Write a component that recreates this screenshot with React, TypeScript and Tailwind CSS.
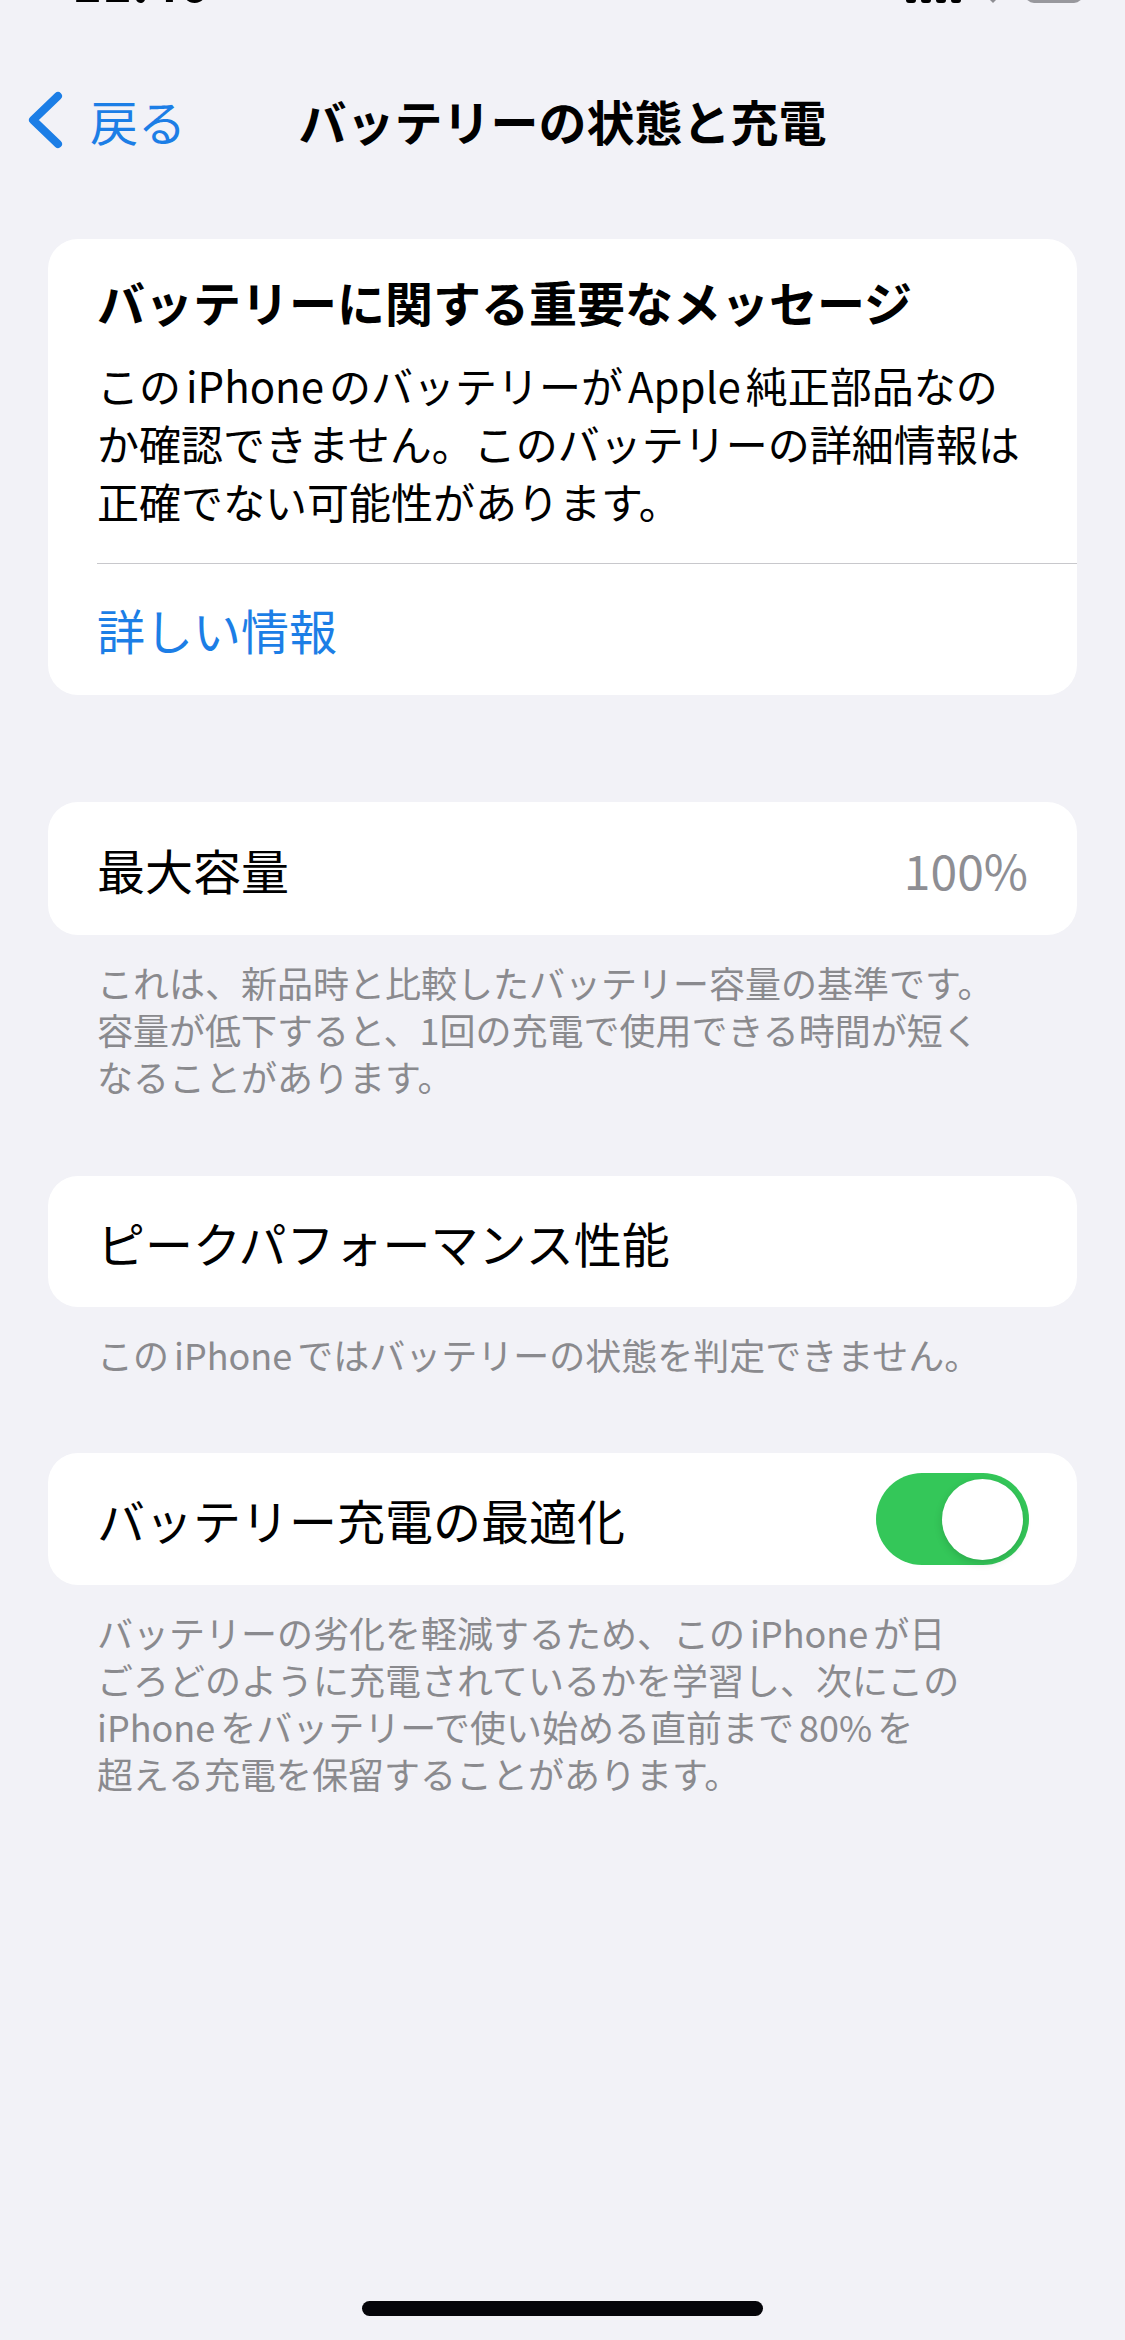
import React from "react";

const Latin = ({ children }: { children: React.ReactNode }) => (
  <span className="mx-[5px]">{children}</span>
);

function StatusBar() {
  // only the bottom few pixels of the status bar are visible in the shot
  return (
    <div className="h-[4px] overflow-hidden">
      <div className="-mt-[42px] flex h-[48px] items-end justify-between pl-[72px] pr-[42px]">
        <span className="text-[51px] font-bold leading-none text-black">11:46</span>
        <div className="mb-[3px] flex items-end gap-[14px]">
          <div className="flex items-end gap-[5px]">
            <div className="h-[14px] w-[10px] rounded-[3px] bg-black" />
            <div className="h-[20px] w-[10px] rounded-[3px] bg-black" />
            <div className="h-[26px] w-[10px] rounded-[3px] bg-black" />
            <div className="h-[32px] w-[10px] rounded-[3px] bg-black" />
          </div>
          <svg width="36" height="26" viewBox="0 0 36 26" className="text-[#8e8e93]">
            <path d="M18 26 L10 18 A11 11 0 0 1 26 18 Z" fill="currentColor" />
          </svg>
          <div className="h-[30px] w-[58px] rounded-[9px] bg-[#98989d]" />
        </div>
      </div>
    </div>
  );
}

function NavBar() {
  return (
    <div className="mt-[86px] grid h-[60px] grid-cols-[1fr_auto_1fr] items-center">
      <div className="flex items-center pl-[26px]">
        <svg width="38" height="58" viewBox="0 0 38 58" fill="none">
          <path
            d="M32 5 L7 29 L32 53"
            stroke="#1c7ee6"
            strokeWidth="8"
            strokeLinecap="round"
            strokeLinejoin="round"
          />
        </svg>
        <span className="ml-[26px] text-[48px] leading-[60px] text-[#1c7ee6]">戻る</span>
      </div>
      <h1 className="text-[48px] font-bold leading-[60px] text-black">バッテリーの状態と充電</h1>
      <div />
    </div>
  );
}

function Footer({ children, className = "" }: { children: React.ReactNode; className?: string }) {
  return (
    <p className={"mx-[48px] whitespace-nowrap pl-[49px] text-[36px] leading-[47px] text-[#8a8a8e] " + className}>
      {children}
    </p>
  );
}

export default function App() {
  return (
    <div className="flex min-h-[2340px] w-[1125px] flex-col bg-[#f2f2f7] font-['Noto_Sans_CJK_JP','Noto_Sans',sans-serif] text-black">
      <StatusBar />
      <NavBar />

      {/* Important message card */}
      <div className="mx-[48px] mt-[89px] rounded-[30px] bg-white pb-[36px] pl-[49px] pt-[32px]">
        <h2 className="text-[48px] font-bold leading-[60px]">バッテリーに関する重要なメッセージ</h2>
        <p className="mt-[25px] whitespace-nowrap text-[42px] leading-[58px]">
          この<Latin>iPhone</Latin>のバッテリーが<Latin>Apple</Latin>純正部品なの
          <br />
          か確認できません。このバッテリーの詳細情報は
          <br />
          正確でない可能性があります。
        </p>
        <div className="mt-[33px] h-px bg-[#c8c8cc]" />
        <div className="mt-[35px] text-[48px] leading-[60px] text-[#1c7ee6]">詳しい情報</div>
      </div>

      {/* Max capacity */}
      <div className="mx-[48px] mt-[107px] flex h-[133px] items-center justify-between rounded-[30px] bg-white px-[49px]">
        <span className="text-[48px] leading-[60px]">最大容量</span>
        <span className="text-[48px] leading-[60px] text-[#8e8e93]">100%</span>
      </div>
      <Footer className="mt-[24px]">
        これは、新品時と比較したバッテリー容量の基準です。
        <br />
        容量が低下すると、1回の充電で使用できる時間が短く
        <br />
        なることがあります。
      </Footer>

      {/* Peak performance */}
      <div className="mx-[48px] mt-[76px] flex h-[131px] items-center rounded-[30px] bg-white px-[49px]">
        <span className="text-[48px] leading-[60px]">ピークパフォーマンス性能</span>
      </div>
      <Footer className="mt-[24px]">
        この<Latin>iPhone</Latin>ではバッテリーの状態を判定できません。
      </Footer>

      {/* Optimized charging */}
      <div className="mx-[48px] mt-[75px] flex h-[132px] items-center justify-between rounded-[30px] bg-white pl-[49px] pr-[48px]">
        <span className="text-[48px] leading-[60px]">バッテリー充電の最適化</span>
        <div className="flex h-[92px] w-[153px] items-center justify-end rounded-full bg-[#34c759] px-[6px]">
          <div className="h-[81px] w-[81px] rounded-full bg-white shadow-[0_3px_8px_rgba(0,0,0,0.15)]" />
        </div>
      </div>
      <Footer className="mt-[24px] leading-[47.5px]">
        バッテリーの劣化を軽減するため、この<Latin>iPhone</Latin>が日
        <br />
        ごろどのように充電されているかを学習し、次にこの
        <br />
        iPhone<span className="ml-[5px]">をバッテリーで使い始める直前まで</span>
        <span className="mx-[5px]">80%</span>を
        <br />
        超える充電を保留することがあります。
      </Footer>

      {/* Home indicator */}
      <div className="mt-auto flex justify-center pb-[24px]">
        <div className="h-[15px] w-[401px] rounded-full bg-[#05050a]" />
      </div>
    </div>
  );
}
